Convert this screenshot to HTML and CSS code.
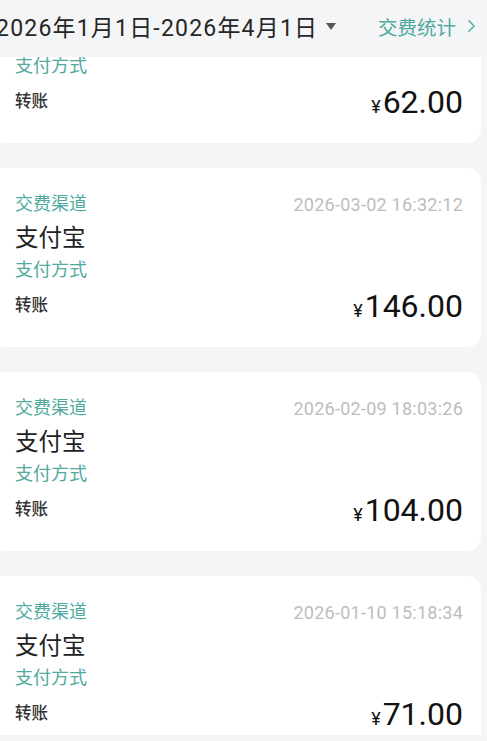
FILE: index.html
```html
<!doctype html>
<html lang="zh-CN">
<head>
	<meta charset="utf-8">
	<meta name="viewport" content="width=device-width, initial-scale=1.0">
	<title>交费记录</title>
	<link rel="stylesheet" href="styles.css">
</head>
<body>
	<header class="topbar">
		<div class="range">2026年1月1日-2026年4月1日<span class="caret"></span></div>
		<a class="stats" href="#">交费统计<svg class="chev" viewBox="0 0 10 16" width="9" height="14"><path d="M2 2l6 6-6 6" fill="none" stroke="currentColor" stroke-width="1.6" stroke-linecap="round" stroke-linejoin="round"/></svg></a>
	</header>

	<main class="list">
		<div class="scroll">
			<section class="card">
				<div class="row-top"><span class="label">交费渠道</span><span class="time">2026-03-20 09:14:05</span></div>
				<div class="channel">支付宝</div>
				<div class="label">支付方式</div>
				<div class="row-bottom"><span class="method">转账</span><span class="amount"><small>¥</small>62.00</span></div>
			</section>

			<section class="card">
				<div class="row-top"><span class="label">交费渠道</span><span class="time">2026-03-02 16:32:12</span></div>
				<div class="channel">支付宝</div>
				<div class="label">支付方式</div>
				<div class="row-bottom"><span class="method">转账</span><span class="amount"><small>¥</small>146.00</span></div>
			</section>

			<section class="card">
				<div class="row-top"><span class="label">交费渠道</span><span class="time">2026-02-09 18:03:26</span></div>
				<div class="channel">支付宝</div>
				<div class="label">支付方式</div>
				<div class="row-bottom"><span class="method">转账</span><span class="amount"><small>¥</small>104.00</span></div>
			</section>

			<section class="card">
				<div class="row-top"><span class="label">交费渠道</span><span class="time">2026-01-10 15:18:34</span></div>
				<div class="channel">支付宝</div>
				<div class="label">支付方式</div>
				<div class="row-bottom"><span class="method">转账</span><span class="amount"><small>¥</small>71.00</span></div>
			</section>
		</div>
	</main>
</body>
</html>
```

FILE: styles.css
```css
html, body {
	margin: 0;
	padding: 0;
}

body {
	width: 487px;
	height: 741px;
	overflow: hidden;
	background: #f3f5f6;
	font-family: Roboto, "Noto Sans CJK SC", sans-serif;
	color: #222;
}

.topbar {
	height: 57px;
	box-sizing: border-box;
	display: flex;
	align-items: center;
	justify-content: space-between;
	padding: 0 11px 5px 0;
}

.range {
	margin-left: -4px;
	font-size: 23px;
	letter-spacing: 1.2px;
	color: #262626;
	display: flex;
	align-items: center;
}

.caret {
	display: inline-block;
	margin-left: 8px;
	border-left: 5px solid transparent;
	border-right: 5px solid transparent;
	border-top: 7px solid #555;
}

.stats {
	display: flex;
	align-items: center;
	gap: 11px;
	font-size: 19.5px;
	color: #4fa99e;
	text-decoration: none;
}

.list {
	height: 678px;
	overflow: hidden;
}

.scroll {
	margin-top: -93px;
}

.card {
	height: 179px;
	box-sizing: border-box;
	margin: 0 6px 25px -10px;
	padding: 24px 18px 0 25px;
	background: #fff;
	border-radius: 14px;
}

.label {
	display: block;
	font-size: 18px;
	line-height: 24px;
	color: #4fa99e;
}

.row-top {
	display: flex;
	justify-content: space-between;
	align-items: center;
	height: 24px;
}

.time {
	font-size: 18px;
	letter-spacing: 0.25px;
	color: #bdbdbd;
}

.channel {
	margin-top: 6px;
	font-size: 23.5px;
	line-height: 32px;
	color: #222;
}

.channel + .label {
	margin-top: 4px;
}

.row-bottom {
	display: flex;
	justify-content: space-between;
	align-items: center;
	height: 44px;
	margin-top: 2px;
}

.method {
	font-size: 16.5px;
	font-weight: 500;
	color: #333;
	margin-top: -4px;
}

.amount {
	font-size: 32px;
	color: #111;
}

.amount small {
	font-size: 18px;
	margin-right: 2px;
}
```
